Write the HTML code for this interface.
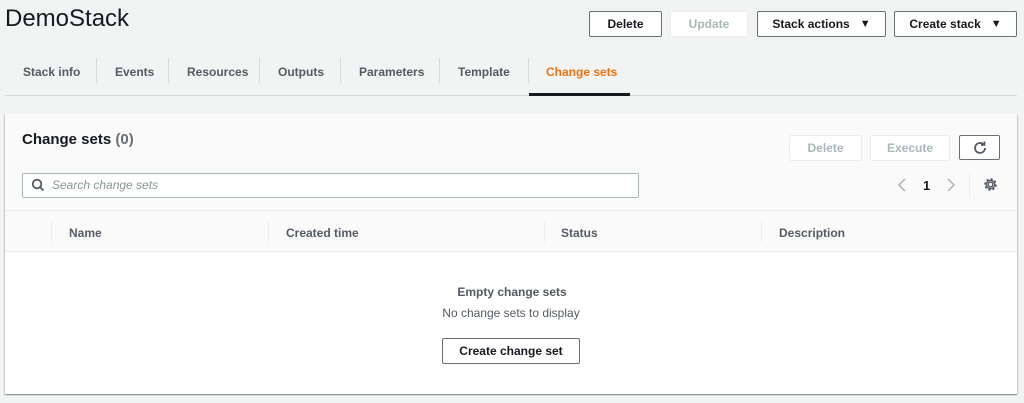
<!DOCTYPE html>
<html><head><style>
*{box-sizing:border-box;margin:0;padding:0}
body{width:1024px;height:403px;background:#f2f3f3;font-family:"Liberation Sans",sans-serif;position:relative;overflow:hidden;color:#16191f}
.a{position:absolute}
.btn{position:absolute;height:26px;border:1px solid #687078;border-radius:2px;background:#fff;font-weight:bold;font-size:12px;display:flex;align-items:center;justify-content:center;color:#16191f}
.dis{border-color:#eaeded;color:#aab7b8}
.tab{position:absolute;top:65px;font-size:12px;font-weight:bold;color:#545b64}
.sep{position:absolute;top:58px;width:1px;height:25px;background:#d5dbdb}
.th{position:absolute;top:226px;font-size:12px;font-weight:bold;color:#545b64}
.tsep{position:absolute;top:221px;width:1px;height:21px;background:#eaeded}
</style></head><body>
<div class="a" style="left:5px;top:5px;font-size:24px;color:#16191f">DemoStack</div>
<div class="btn" style="left:589px;top:11px;width:73px">Delete</div>
<div class="btn dis" style="left:670px;top:11px;width:78px">Update</div>
<div class="btn" style="left:757px;top:11px;width:129px">Stack actions&nbsp;&nbsp;&nbsp;<span style="font-size:11px">▼</span></div>
<div class="btn" style="left:894px;top:11px;width:123px">Create stack&nbsp;&nbsp;&nbsp;<span style="font-size:11px">▼</span></div>
<div class="tab" style="left:23px">Stack info</div>
<div class="sep" style="left:96px"></div>
<div class="tab" style="left:115px">Events</div>
<div class="sep" style="left:168px"></div>
<div class="tab" style="left:187px">Resources</div>
<div class="sep" style="left:259px"></div>
<div class="tab" style="left:278px">Outputs</div>
<div class="sep" style="left:340px"></div>
<div class="tab" style="left:359px">Parameters</div>
<div class="sep" style="left:439px"></div>
<div class="tab" style="left:458px">Template</div>
<div class="sep" style="left:528px"></div>
<div class="tab" style="left:546px;color:#ec7211">Change sets</div>
<div class="a" style="left:5px;top:95px;width:1012px;height:1px;background:#d5dbdb"></div>
<div class="a" style="left:529px;top:93px;width:101px;height:3px;background:#16191f"></div>
<div class="a" style="left:5px;top:114px;width:1012px;height:280px;background:#fff;box-shadow:0 1px 1px rgba(0,28,36,.3),1px 1px 1px rgba(0,28,36,.15),-1px 1px 1px rgba(0,28,36,.15)"></div>
<div class="a" style="left:5px;top:114px;width:1012px;height:138px;background:#fafafa;border-bottom:1px solid #eaeded"></div>
<div class="a" style="left:5px;top:210px;width:1012px;height:1px;background:#eaeded"></div>
<div class="a" style="left:22px;top:131px;font-size:15px;font-weight:bold">Change sets <span style="color:#687078;font-weight:bold">(0)</span></div>
<div class="btn dis" style="left:789px;top:135px;width:73px">Delete</div>
<div class="btn dis" style="left:870px;top:135px;width:80px">Execute</div>
<div class="btn" style="left:959px;top:135px;width:41px;height:25px"><svg width="16" height="16" viewBox="0 0 16 16"><path d="M13 8a5 5 0 1 1-1.5-3.6" fill="none" stroke="#545b64" stroke-width="1.8"/><path d="M12.5 1.5v3.5h-3.5" fill="none" stroke="#545b64" stroke-width="1.8"/></svg></div>
<div class="a" style="left:22px;top:173px;width:617px;height:25px;background:#fff;border:1px solid #aab7b8;border-radius:2px"></div>
<svg class="a" style="left:31px;top:178px" width="14" height="14" viewBox="0 0 14 14"><circle cx="6" cy="6" r="4.3" fill="none" stroke="#545b64" stroke-width="1.8"/><path d="M9 9l3.5 3.5" stroke="#545b64" stroke-width="1.8"/></svg>
<div class="a" style="left:52px;top:178px;font-size:12px;font-style:italic;color:#879596">Search change sets</div>
<svg class="a" style="left:897px;top:178px" width="10" height="14"><path d="M8 1L2 7l6 6" fill="none" stroke="#aab7b8" stroke-width="1.5"/></svg>
<div class="a" style="left:923px;top:178px;font-size:13px;font-weight:bold">1</div>
<svg class="a" style="left:946px;top:178px" width="10" height="14"><path d="M2 1l6 6-6 6" fill="none" stroke="#aab7b8" stroke-width="1.5"/></svg>
<div class="a" style="left:969px;top:172px;width:1px;height:26px;background:#eaeded"></div>
<svg class="a" style="left:983px;top:177px" width="15" height="15" viewBox="0 0 16 16"><circle cx="8" cy="8" r="2.5" fill="none" stroke="#545b64" stroke-width="1.6"/><circle cx="8" cy="8" r="5.5" fill="none" stroke="#545b64" stroke-width="2.4" stroke-dasharray="2.2 2.1"/><circle cx="8" cy="8" r="4.5" fill="none" stroke="#545b64" stroke-width="1.4"/></svg>
<div class="tsep" style="left:51px"></div>
<div class="th" style="left:69px">Name</div>
<div class="tsep" style="left:268px"></div>
<div class="th" style="left:286px">Created time</div>
<div class="tsep" style="left:544px"></div>
<div class="th" style="left:561px">Status</div>
<div class="tsep" style="left:761px"></div>
<div class="th" style="left:779px">Description</div>
<div class="a" style="left:0;width:1024px;top:285px;text-align:center;font-size:12px;font-weight:bold;color:#545b64">Empty change sets</div>
<div class="a" style="left:0;width:1022px;top:306px;text-align:center;font-size:12px;color:#545b64">No change sets to display</div>
<div class="btn" style="left:442px;top:338px;width:138px">Create change set</div>
</body></html>
